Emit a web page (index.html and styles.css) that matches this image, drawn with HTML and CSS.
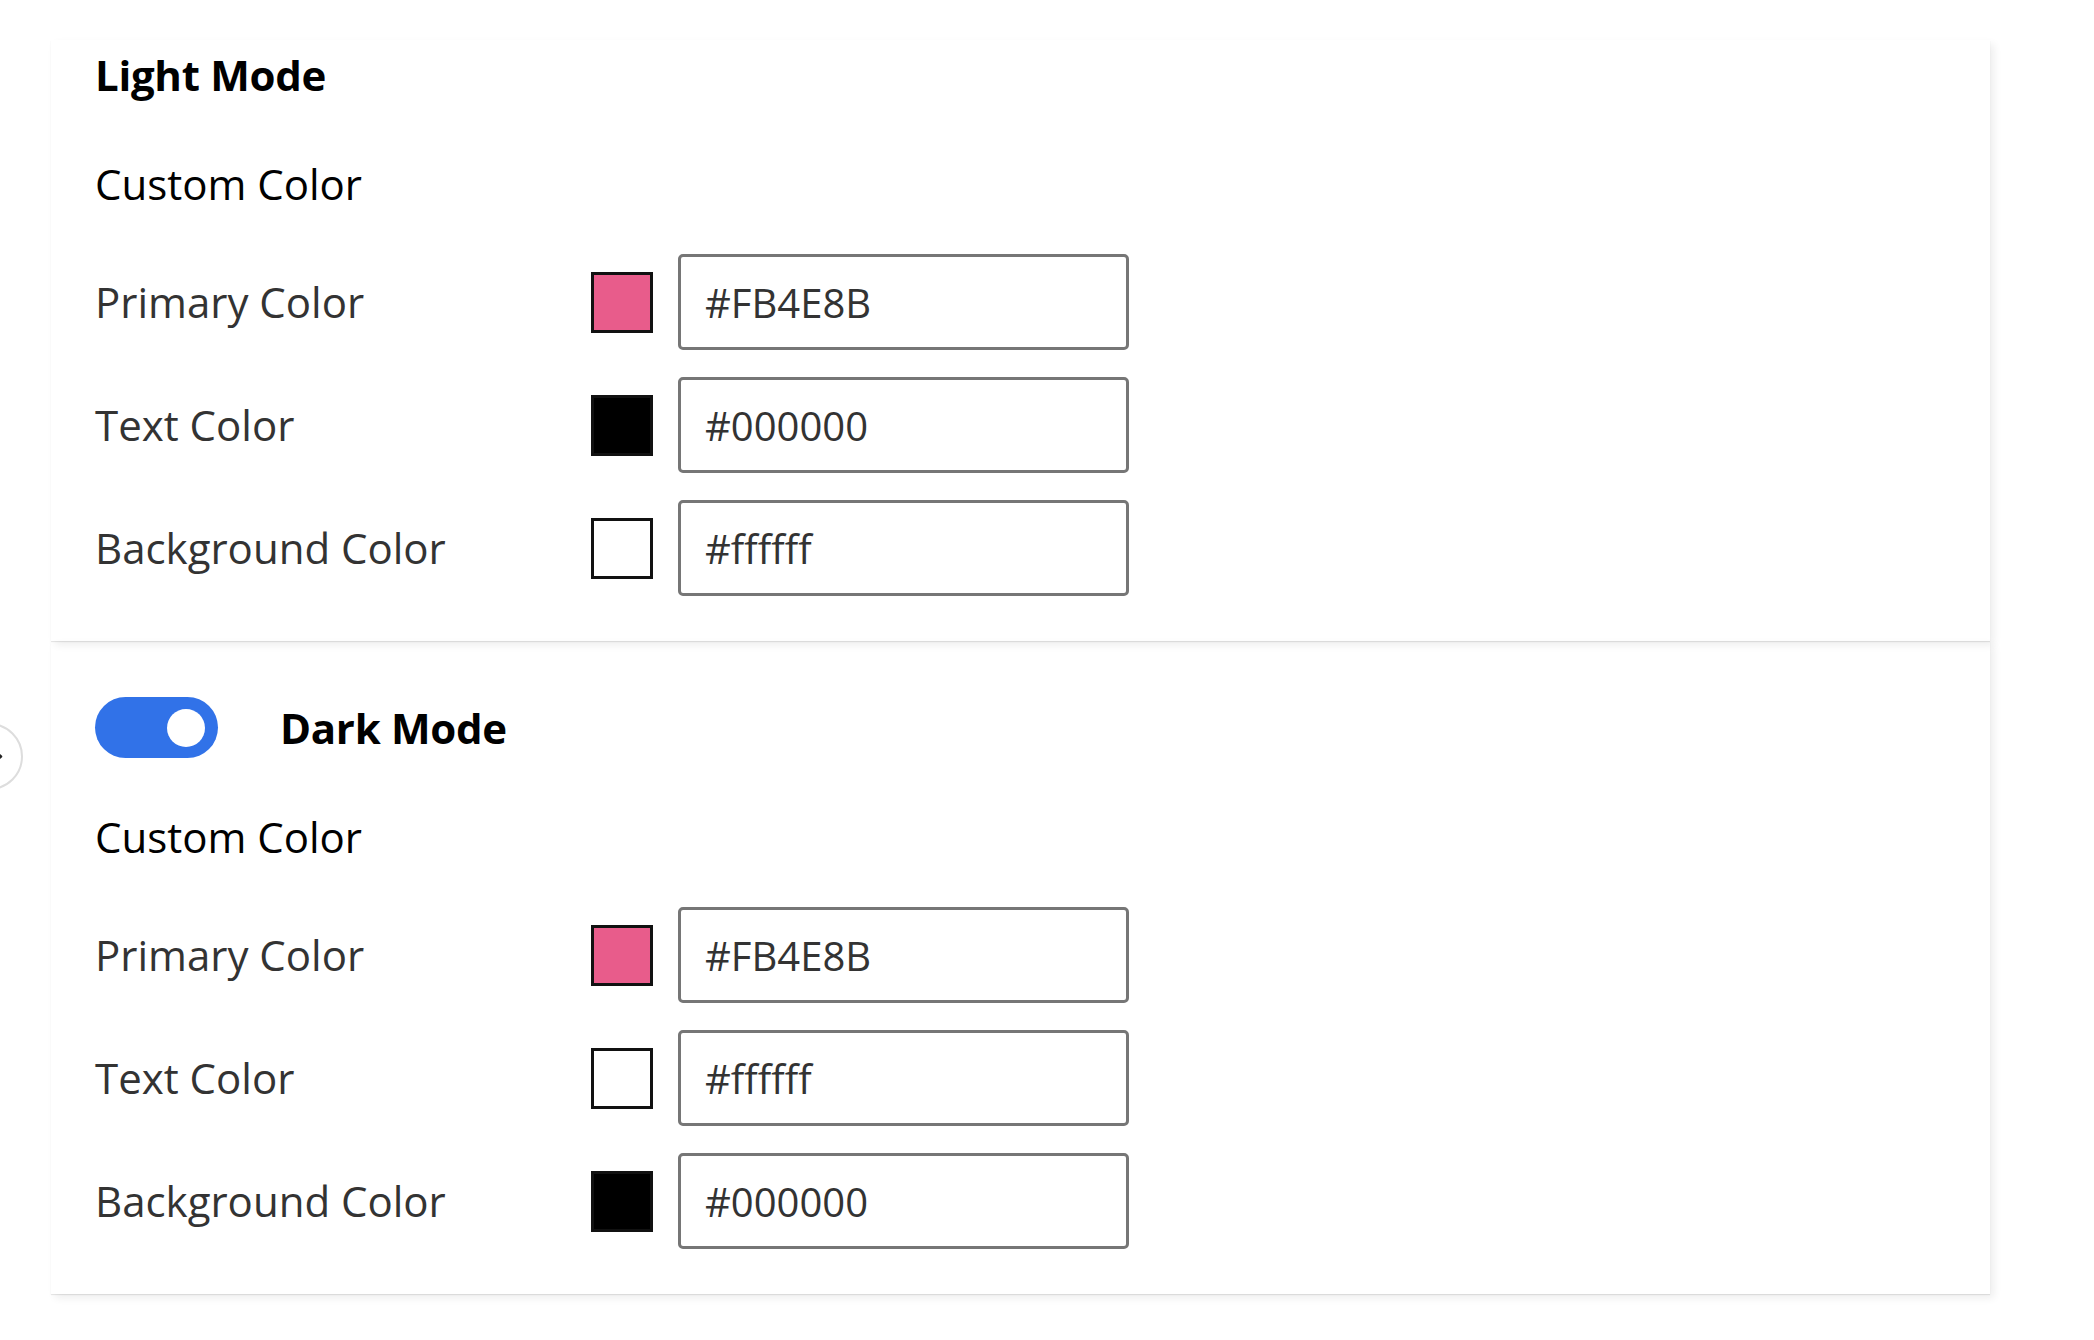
FILE: index.html
```html
<!DOCTYPE html>
<html lang="en">
<head>
<meta charset="utf-8">
<title>Theme Colors</title>
<link rel="stylesheet" href="styles.css">
</head>
<body>
<div class="collapse-btn">
  <svg class="chev" width="67" height="67" viewBox="0 0 67 67"><path d="M37 27 L45 33.5 L37 40" fill="none" stroke="#222" stroke-width="2.5" stroke-linecap="round" stroke-linejoin="round"/></svg>
</div>
<main class="page">
  <section class="card card-light">
    <h2 class="mode-title">Light Mode</h2>
    <h3 class="sub-title">Custom Color</h3>
    <div class="rows">
      <div class="row">
        <span class="label">Primary Color</span>
        <span class="swatch sw-pink"></span>
        <input class="hex" type="text" value="#FB4E8B">
      </div>
      <div class="row">
        <span class="label">Text Color</span>
        <span class="swatch sw-black"></span>
        <input class="hex" type="text" value="#000000">
      </div>
      <div class="row">
        <span class="label">Background Color</span>
        <span class="swatch sw-white"></span>
        <input class="hex" type="text" value="#ffffff">
      </div>
    </div>
  </section>
  <section class="card card-dark">
    <div class="mode-head">
      <span class="toggle"><span class="knob"></span></span>
      <h2 class="mode-title">Dark Mode</h2>
    </div>
    <h3 class="sub-title">Custom Color</h3>
    <div class="rows">
      <div class="row">
        <span class="label">Primary Color</span>
        <span class="swatch sw-pink"></span>
        <input class="hex" type="text" value="#FB4E8B">
      </div>
      <div class="row">
        <span class="label">Text Color</span>
        <span class="swatch sw-white"></span>
        <input class="hex" type="text" value="#ffffff">
      </div>
      <div class="row">
        <span class="label">Background Color</span>
        <span class="swatch sw-black"></span>
        <input class="hex" type="text" value="#000000">
      </div>
    </div>
  </section>
</main>
</body>
</html>
```

FILE: styles.css
```css
* { box-sizing: border-box; }

html, body {
  margin: 0;
  padding: 0;
  background: #ffffff;
  font-family: "Open Sans", "Noto Sans", "Liberation Sans", sans-serif;
  color: #000;
}

body {
  position: relative;
  width: 2094px;
  height: 1340px;
  overflow: hidden;
}

.page {
  padding: 40px 0 0 51px;
  width: 1990px;
  display: flex;
  flex-direction: column;
}

.card {
  background: transparent;
  padding: 5px 44px 45px 44px;
  box-shadow: 4px 4px 8px rgba(0, 0, 0, 0.07), 0 1px 1px rgba(0, 0, 0, 0.09);
}

.card-light { background: #ffffff; }

.card-dark {
  padding-top: 56px;
}

.mode-title {
  margin: 0;
  font-size: 42px;
  line-height: 60px;
  font-weight: 700;
  letter-spacing: -0.3px;
  color: #000;
}

.sub-title {
  margin: 49px 0 40px;
  font-size: 42px;
  line-height: 60px;
  font-weight: 400;
  color: #000;
}

.mode-head {
  display: flex;
  align-items: center;
  gap: 62px;
  height: 61px;
}

.toggle {
  display: flex;
  align-items: center;
  justify-content: flex-end;
  width: 123px;
  height: 61px;
  padding-right: 13px;
  border-radius: 31px;
  background: #3172e8;
}

.knob {
  width: 38px;
  height: 38px;
  border-radius: 50%;
  background: #ffffff;
}

.rows {
  display: flex;
  flex-direction: column;
  gap: 27px;
}

.row {
  display: flex;
  align-items: center;
  height: 96px;
}

.label {
  width: 496px;
  font-size: 42px;
  line-height: 60px;
  color: #333333;
}

.swatch {
  width: 62px;
  height: 61px;
  border: 3px solid #111111;
  margin-right: 25px;
}

.sw-pink { background: #e85c8b; }
.sw-black { background: #000000; }
.sw-white { background: #ffffff; }

.hex {
  width: 451px;
  height: 96px;
  margin: 0;
  padding: 0 0 0 24px;
  border: 3px solid #767676;
  border-radius: 5px;
  background: #ffffff;
  font-family: "Open Sans", "Noto Sans", "Liberation Sans", sans-serif;
  font-size: 40px;
  color: #333333;
  outline: none;
}

.collapse-btn {
  position: absolute;
  left: -44px;
  top: 723px;
  width: 67px;
  height: 67px;
  border: 2px solid #dddddd;
  border-radius: 50%;
  background: #ffffff;
}

.chev {
  position: absolute;
  left: -2px;
  top: -2px;
}
```
